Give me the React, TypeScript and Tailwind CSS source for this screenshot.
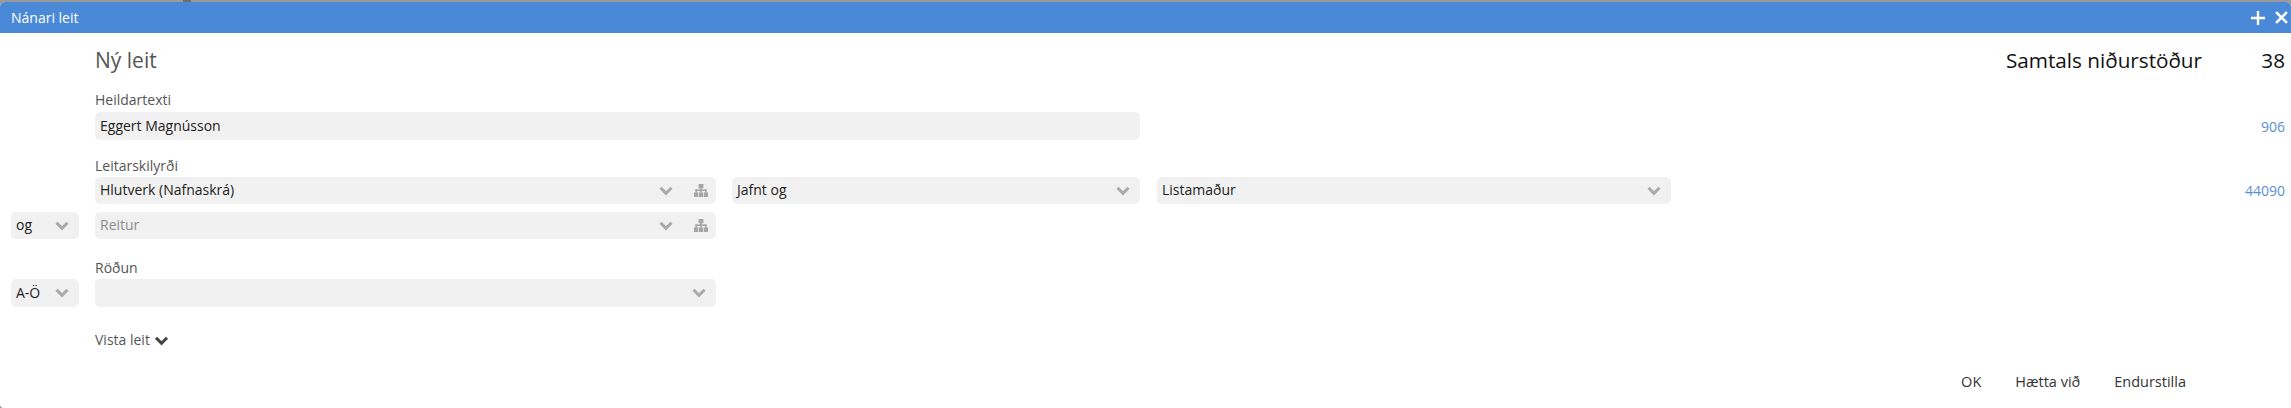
import React from "react";

const Chevron = ({ className = "" }: { className?: string }) => (
  <svg viewBox="0 0 14 10" className={className} fill="none" stroke="currentColor" strokeWidth="3">
    <path d="M1.5 1.8 7 7.4l5.5-5.6" />
  </svg>
);

const Tree = () => (
  <svg viewBox="0 0 14 13" className="w-[14px] h-[13px] text-[#a6a6a6]" fill="currentColor">
    <rect x="4.6" y="0" width="4.8" height="4.2" />
    <rect x="6.2" y="4" width="1.6" height="2" />
    <rect x="1.4" y="5.4" width="11.2" height="1.6" />
    <rect x="1.4" y="5.4" width="1.6" height="3.2" />
    <rect x="11" y="5.4" width="1.6" height="3.2" />
    <rect x="6.2" y="5.4" width="1.6" height="3.2" />
    <rect x="0" y="8.4" width="4.2" height="4.6" />
    <rect x="4.9" y="8.4" width="4.2" height="4.6" />
    <rect x="9.8" y="8.4" width="4.2" height="4.6" />
  </svg>
);

function Select({
  text,
  w,
  muted,
  tree,
  h = "h-[27px]",
}: {
  text?: string;
  w: string;
  muted?: boolean;
  tree?: boolean;
  h?: string;
}) {
  return (
    <div className={`${w} ${h} shrink-0 rounded-[5px] bg-[#f1f1f1] flex items-center pl-[5px] ${tree ? "pr-[8px]" : "pr-[10px]"}`}>
      <span className={`flex-1 -mt-[2px] whitespace-nowrap text-[14px] ${muted ? "text-[#8c8c8c]" : "text-[#222222]"}`}>{text}</span>
      <Chevron className={`w-[14px] h-[10px] text-[#aaaaaa] ${tree ? "mr-[21px]" : ""}`} />
      {tree && <Tree />}
    </div>
  );
}

export default function App() {
  return (
    <div className="w-[2291px] h-[408px] overflow-hidden bg-[#9a9a9a] font-['Open_Sans',sans-serif]">
      <div className="h-[2px] flex">
        <div className="ml-[183px] w-[8px] bg-[#6f6f6f]" />
      </div>
      <div className="h-[406px] bg-white rounded-t-[5px] rounded-bl-[4px] overflow-hidden flex flex-col">
        <div className="h-[31px] shrink-0 bg-[#4a89d7] flex items-center pl-[11px] pr-[3px] text-white">
          <span className="flex-1 text-[14px] -mt-[1px]">Nánari leit</span>
          <svg viewBox="0 0 14 14" className="w-[14px] h-[14px] mr-[10px]" stroke="#ffffff" strokeWidth="2.4">
            <path d="M7 0v14M0 7h14" />
          </svg>
          <svg viewBox="0 0 12 12" className="w-[13px] h-[13px]" stroke="#ffffff" strokeWidth="2.4">
            <path d="M1 1l10 10M11 1 1 11" />
          </svg>
        </div>

        <div className="flex shrink-0 items-center h-[56px] pl-[95px] pr-[6px]">
          <span className="flex-1 text-[21px] text-[#555555]">Ný leit</span>
          <span className="text-[20.7px] font-medium text-[#111111]">Samtals niðurstöður</span>
          <span className="w-[83px] text-right text-[20.7px] font-medium text-[#111111]">38</span>
        </div>

        <div className="shrink-0 pl-[95px] pt-[1px] text-[14px] leading-[19px] text-[#555555] h-[23px]">Heildartexti</div>
        <div className="shrink-0 flex items-center pl-[95px] pr-[6px]">
          <div className="w-[1045px] h-[28px] rounded-[5px] bg-[#f1f1f1] flex items-center pl-[5px] pb-[2px] text-[14px] text-[#222222]">
            Eggert Magnússon
          </div>
          <span className="flex-1 text-right text-[14px] text-[#5b8fd3]">906</span>
        </div>

        <div className="shrink-0 pl-[95px] text-[14px] leading-[19px] text-[#555555] h-[37px] pt-[16px]">Leitarskilyrði</div>
        <div className="shrink-0 flex items-center gap-[16px] pl-[95px] pr-[6px]">
          <Select text="Hlutverk (Nafnaskrá)" w="w-[621px]" tree />
          <Select text="Jafnt og" w="w-[408px]" />
          <Select text="Listamaður" w="w-[514px] ml-[1px]" />
          <span className="flex-1 text-right text-[14px] text-[#5b8fd3]">44090</span>
        </div>

        <div className="shrink-0 flex items-center gap-[16px] pl-[11px] mt-[8px]">
          <Select text="og" w="w-[68px]" />
          <Select text="Reitur" w="w-[621px]" muted tree />
        </div>

        <div className="shrink-0 pl-[95px] text-[14px] leading-[19px] text-[#555555] h-[40px] pt-[19px]">Röðun</div>
        <div className="shrink-0 flex items-center gap-[16px] pl-[11px]">
          <Select text="A-Ö" w="w-[68px]" h="h-[28px]" />
          <Select w="w-[621px]" h="h-[28px]" />
        </div>

        <div className="shrink-0 pl-[95px] mt-[23px] flex items-center text-[14px] text-[#555555] leading-[19px]">
          Vista leit
          <Chevron className="w-[15px] h-[10px] ml-[4px] mt-[2px] text-[#444444]" />
        </div>

        <div className="shrink-0 flex justify-end items-center mt-[23px] pr-[105px] text-[14.5px] text-[#333333] leading-[20px]">
          <span>OK</span>
          <span className="ml-[34px]">Hætta við</span>
          <span className="ml-[34px]">Endurstilla</span>
        </div>
      </div>
    </div>
  );
}
